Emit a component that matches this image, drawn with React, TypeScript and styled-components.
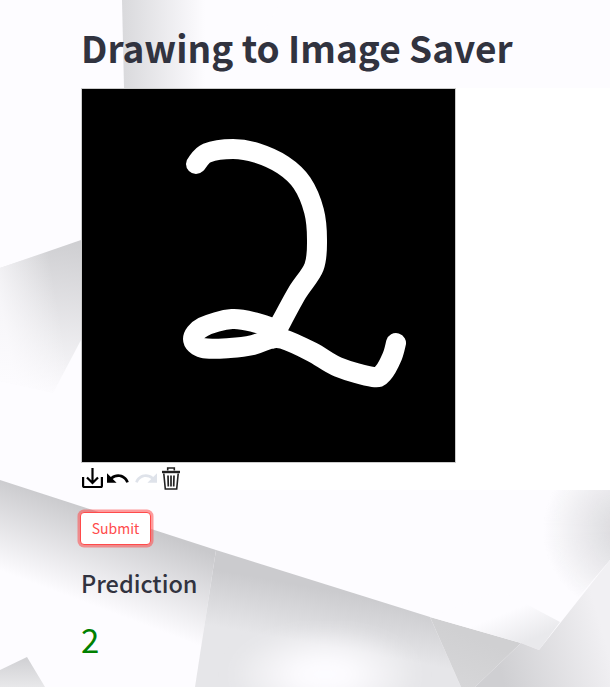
import React from "react";
import styled, { createGlobalStyle } from "styled-components";

const Global = createGlobalStyle`
  html, body { margin: 0; padding: 0; background: #fdfcff; }
  body { width: 610px; height: 687px; overflow: hidden; font-family: "Noto Sans CJK JP", "Noto Sans", sans-serif; }
`;
const Page = styled.main`
  position: relative;
  width: 610px;
  height: 687px;
  overflow: hidden;
  background: #fdfcff;
`;
const Wallpaper = styled.svg`
  position: absolute;
  inset: 0;
`;
const Content = styled.div`
  position: relative;
  display: flex;
  flex-direction: column;
  padding-left: 81px;
`;
const Title = styled.h1`
  margin: 0;
  height: 88px;
  padding-top: 22px;
  box-sizing: border-box;
  font-size: 37px;
  line-height: 50px;
  font-weight: 700;
  color: #31333f;
`;
const CanvasPanel = styled.section`
  display: flex;
  flex-direction: column;
  height: 402px;
  background: #ffffff;
`;
const Canvas = styled.svg`
  display: block;
  width: 375px;
  height: 375px;
  box-sizing: border-box;
  border: 1px solid #cccccc;
  background: #000000;
`;
const Toolbar = styled.div`
  display: flex;
  align-items: center;
  gap: 4px;
  height: 24px;
  padding: 3px 0 0 1px;
`;
const ToolIcon = styled.svg<{ $w: number; $h: number }>`
  display: block;
  width: ${(p) => p.$w}px;
  height: ${(p) => p.$h}px;
`;
const SubmitButton = styled.button`
  margin: 22px 0 0 -1px;
  width: 71px;
  height: 33px;
  padding: 0 0 2px;
  align-self: flex-start;
  border: 1px solid #ff4b4b;
  border-radius: 4px;
  background: #ffffff;
  box-shadow: 0 0 0 2.5px rgba(255, 75, 75, 0.55);
  color: #ff4b4b;
  font: 400 14px/20px "Noto Sans CJK JP", sans-serif;
`;
const Heading = styled.h3`
  margin: 21px 0 0;
  font-size: 23.5px;
  line-height: 34px;
  font-weight: 500;
  color: #31333f;
`;
const Result = styled.p`
  margin: 17px 0 0;
  font-size: 33px;
  line-height: 44px;
  color: green;
`;

const spline = (p: number[][]) => {
  let d = `M${p[0][0]} ${p[0][1]}`;
  for (let i = 0; i < p.length - 1; i++) {
    const a = p[Math.max(0, i - 1)], b = p[i], c = p[i + 1], e = p[Math.min(p.length - 1, i + 2)];
    d += ` C${b[0] + (c[0] - a[0]) / 6} ${b[1] + (c[1] - a[1]) / 6} ${c[0] - (e[0] - b[0]) / 6} ${c[1] - (e[1] - b[1]) / 6} ${c[0]} ${c[1]}`;
  }
  return d;
};
const shift = (pts: number[][]) => pts.map(([x, y]) => [x - 81, y - 88]);
const upper = shift([
  [196,164],[207,153],[233,149],[257,153],[283,165],[302,183],[314,211],[317,240],[314,267],[297,293],[278,328],
]);
const lower = shift([
  [278,330],[257,323],[232,319],[203,327],[193,339],[203,348],[230,348],[253,345],[270,339],[283,339],[312,352],[338,367],[373,377],[383,373],[392,357],[396,343],
]);

const Grad = ({ id, x1, y1, x2, y2, from, to }: { id: string; x1: number; y1: number; x2: number; y2: number; from: string; to: string }) => (
  <linearGradient id={id} gradientUnits="userSpaceOnUse" x1={x1} y1={y1} x2={x2} y2={y2}>
    <stop offset="0" stopColor={from} />
    <stop offset="1" stopColor={to} />
  </linearGradient>
);

export default function App() {
  return (
    <Page>
      <Global />
      <Wallpaper width="610" height="687" viewBox="0 0 610 687">
        <defs>
          <Grad id="top" x1={122} y1={40} x2={205} y2={40} from="#d9d9dc" to="#fdfcff" />
          <Grad id="left" x1={70} y1={235} x2={50} y2={392} from="#cdcdd0" to="#fbfafd" />
          <linearGradient id="leftFade" gradientUnits="userSpaceOnUse" x1={0} y1={300} x2={55} y2={290}>
            <stop offset="0" stopColor="#fdfcff" stopOpacity="0.75" />
            <stop offset="1" stopColor="#fdfcff" stopOpacity="0" />
          </linearGradient>
          <Grad id="band" x1={110} y1={515} x2={78} y2={600} from="#c9c9cc" to="#fdfcff" />
          <Grad id="mid" x1={300} y1={585} x2={290} y2={640} from="#cbcbce" to="#e6e6e9" />
          <Grad id="facet" x1={480} y1={640} x2={460} y2={687} from="#d0d0d2" to="#d6d6d8" />
          <Grad id="corner" x1={500} y1={670} x2={605} y2={640} from="#cfcfd2" to="#f1f0f3" />
          <radialGradient id="tr" gradientUnits="userSpaceOnUse" cx="628" cy="530" r="85">
            <stop offset="0" stopColor="#d6d6d9" />
            <stop offset="1" stopColor="#d6d6d9" stopOpacity="0" />
          </radialGradient>
          <Grad id="above" x1={525} y1={642} x2={512} y2={610} from="#e9e9ec" to="#fdfcff" />
          <Grad id="low" x1={20} y1={660} x2={20} y2={687} from="#d2d2d5" to="#e8e8ea" />
          <radialGradient id="blob" gradientUnits="userSpaceOnUse" cx="325" cy="675" r="95" gradientTransform="translate(0 337) scale(1 0.5)">
            <stop offset="0.25" stopColor="#fdfcff" />
            <stop offset="1" stopColor="#fdfcff" stopOpacity="0" />
          </radialGradient>
          <filter id="soft"><feGaussianBlur stdDeviation="0.7" /></filter>
          <filter id="softer"><feGaussianBlur stdDeviation="8" /></filter>
        </defs>
        <g filter="url(#soft)">
          <polygon points="122,0 282,0 233,88 124,88" fill="url(#top)" />
          <polygon points="0,268 81,240 81,340 53,393 0,381" fill="url(#left)" />
          <polygon points="0,268 81,240 81,340 53,393 0,381" fill="url(#leftFade)" />
          <polygon points="0,480 216,550 195,687 0,687" fill="url(#band)" />
          <polygon points="216,550 195,687 461,687 430,617" fill="url(#mid)" />
          <polygon points="430,617 521,643 475,687 461,687" fill="url(#facet)" />
          <polygon points="610,560 610,490 520,490 520,600 555,625" fill="url(#tr)" />
          <polygon points="430,617 521,643 539,650 560,622 500,590" fill="url(#above)" />
          <polygon points="521,643 539,650 610,560 610,687 475,687" fill="url(#corner)" />
          <polygon points="0,670 27,657 45,687 0,687" fill="url(#low)" />
        </g>
        <ellipse cx="325" cy="675" rx="110" ry="45" fill="url(#blob)" filter="url(#softer)" />
      </Wallpaper>
      <Content>
        <Title>Drawing to Image Saver</Title>
        <CanvasPanel>
          <Canvas viewBox="1 1 373 373">
            <path d={spline(upper)} fill="none" stroke="#ffffff" strokeWidth="20" strokeLinecap="round" strokeLinejoin="round" />
            <path d={spline(lower)} fill="none" stroke="#ffffff" strokeWidth="20" strokeLinecap="round" strokeLinejoin="round" />
          </Canvas>
          <Toolbar>
            <ToolIcon $w={21} $h={20} viewBox="0 0 21 20" fill="none" stroke="#000" strokeWidth="2.2">
              <path d="M1.1 9v9a1 1 0 0 0 1 1h16.8a1 1 0 0 0 1-1V9" />
              <path d="M10.5 0v14.5M5 9.5l5.5 5.5 5.5-5.5" />
            </ToolIcon>
            <ToolIcon $w={23} $h={11} viewBox="2 7 21.6 9.8" fill="#000">
              <path d="M12.5 8c-2.65 0-5.05.99-6.9 2.6L2 7v9h9l-3.62-3.62c1.39-1.16 3.16-1.88 5.12-1.88 3.54 0 6.55 2.31 7.6 5.5l2.37-.78C21.08 11.03 17.15 8 12.5 8z" />
            </ToolIcon>
            <ToolIcon $w={23} $h={11} viewBox="0.4 7 21.6 9.8" fill="#dfe3ea">
              <path d="M18.4 10.6C16.55 8.99 14.15 8 11.5 8c-4.65 0-8.58 3.03-9.96 7.22l2.36.78c1.05-3.19 4.05-5.5 7.6-5.5 1.95 0 3.73.72 5.12 1.88L13 16h9V7l-3.6 3.6z" />
            </ToolIcon>
            <ToolIcon $w={20} $h={23} viewBox="0 0 20 23" fill="none" stroke="#222" strokeWidth="1.6">
              <path d="M6.7 3.5V1h6.6v2.5" />
              <path d="M1 5h18" strokeWidth="2.4" />
              <path d="M2.8 6.5L4.3 22h11.4L17.2 6.5" />
              <path d="M7 8.5l.3 11M10 8.5v11M13 8.5l-.3 11" strokeWidth="1.7" />
            </ToolIcon>
          </Toolbar>
        </CanvasPanel>
        <SubmitButton>Submit</SubmitButton>
        <Heading>Prediction</Heading>
        <Result>2</Result>
      </Content>
    </Page>
  );
}
